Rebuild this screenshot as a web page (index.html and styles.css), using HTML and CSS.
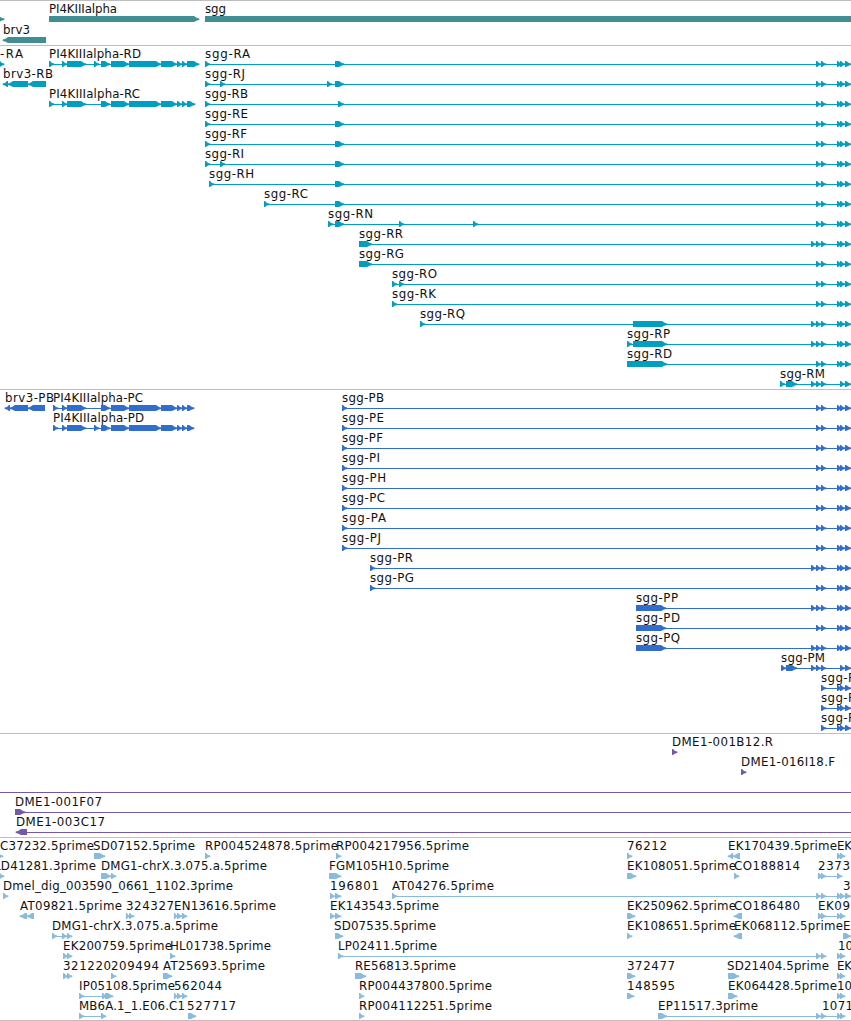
FILE: index.html
```
<!DOCTYPE html>
<html lang="en">
<head>
<meta charset="utf-8">
<title>Genome browser</title>
<link rel="stylesheet" href="styles.css">
</head>
<body>
<main class="browser">
  <svg class="track track-genes" id="genes"></svg>
  <svg class="track track-transcripts" id="transcripts"></svg>
  <svg class="track track-cds" id="cds"></svg>
  <svg class="track track-clones" id="clones"></svg>
  <svg class="track track-ests" id="ests"></svg>
</main>
<script src="tracks.js"></script>
</body>
</html>
```
FILE: styles.css
```
body {
  margin: 0;
  background: #fff;
}

.browser {
  display: flex;
  flex-direction: column;
  width: 851px;
  height: 1021px;
  overflow: hidden;
}

.track {
  display: block;
  flex: none;
  box-sizing: border-box;
  width: 851px;
  border-top: 1px solid #bebebe;
  overflow: hidden;
}

.track-genes { height: 45px; color: #408e92; }
.track-transcripts { height: 344px; color: #009fc1; }
.track-cds { height: 344px; color: #306dce; }
.track-clones { height: 104px; color: #7658a9; }
.track-ests { height: 184px; color: #88bbdd; border-bottom: 1px solid #bebebe; }

.feature { fill: currentColor; }

.label {
  fill: #111;
  font-family: "DejaVu Sans", sans-serif;
  font-size: 11.8px;
}
```
FILE: tracks.js
```
const NS = "http://www.w3.org/2000/svg";

function add(parent, name, attrs, text) {
  const el = document.createElementNS(NS, name);
  for (const key in attrs) el.setAttribute(key, attrs[key]);
  if (text) el.textContent = text;
  parent.appendChild(el);
}

// Each item: [row, label, labelStart, labelEnd, blocks, lineStart, lineEnd]
// A block is [start, end]; start > end means the reverse strand.
function draw(id, items, pitch) {
  const svg = document.getElementById(id);
  for (const [row, label, from, to, blocks, l0, l1] of items) {
    const y = 15 + row * pitch;
    if (l1 !== undefined) {
      add(svg, "rect", { class: "feature", x: l0, y: y + 3, width: l1 - l0, height: 1 });
    }
    for (const [a, b] of blocks) {
      const dir = b > a ? 1 : -1;
      const length = Math.abs(b - a);
      const neck = length > 6 ? b - dir * 5 : a + dir;
      const tip = b - dir * 2;
      const edge = b + dir * 0.3;
      add(svg, "path", {
        class: "feature",
        d: `M${a} ${y}H${neck}L${tip} ${y + 2}L${edge} ${y + 2.6}V${y + 4}L${tip} ${y + 4.6}L${neck} ${y + 6}H${a}Z`
      });
    }
    if (label) {
      add(svg, "text", { class: "label", x: from, y: y - 3, textLength: to - from }, label);
    }
  }
}

const two = [[816, 821], [821, 826], [837, 842], [840, 845], [845, 851]];
const three = [[811, 816], ...two];
const late = [[811, 816], [816, 821], [821, 826], [840, 845], [845, 851]];
const end = two.slice(2);
const core = [[101, 110], [111, 129], [129, 161], [161, 177], [177, 182], [182, 187]];
const mid = [335, 344];

draw("genes", [
  [0, "", 0, 0, [[-8, 4]]],
  [0, "PI4KIIIalpha", 49, 117, [[49, 199]]],
  [0, "sgg", 205, 226, [[205, 870]]],
  [1, "brv3", 3, 30, [[46, 3]]]
], 21);

draw("transcripts", [
  [0, "-RA", 0, 23, [[-1, 4]]],
  [0, "PI4KIIIalpha-RD", 49, 141, [[49, 54], [62, 67], [67, 86], [94, 99], ...core, [187, 199]], 49, 199],
  [2, "PI4KIIIalpha-RC", 49, 140, [[49, 54], [62, 67], [67, 86], ...core, [187, 195]], 49, 195],
  [1, "brv3-RB", 3, 53, [[8, 3], [28, 8], [46, 28]], 3, 46],
  [0, "sgg-RA", 205, 250, [[205, 210], mid, ...two], 205, 851],
  [1, "sgg-RJ", 205, 245, [[205, 210], [220, 225], [327, 332], mid, ...two], 205, 851],
  [2, "sgg-RB", 205, 248, [[205, 210], [338, 344], ...two], 205, 851],
  [3, "sgg-RE", 205, 248, [[205, 210], mid, ...two], 205, 851],
  [4, "sgg-RF", 205, 247, [[205, 210], mid, ...two], 205, 851],
  [5, "sgg-RI", 205, 244, [[205, 210], [220, 225], mid, ...two], 205, 851],
  [6, "sgg-RH", 209, 254, [[209, 214], mid, ...two], 209, 851],
  [7, "sgg-RC", 264, 308, [[264, 269], mid, ...two], 264, 851],
  [8, "sgg-RN", 328, 373, [[328, 333], mid, [399, 404], [473, 478], ...two], 328, 851],
  [9, "sgg-RR", 359, 403, [[359, 372], ...three], 359, 851],
  [10, "sgg-RG", 359, 404, [[359, 372], ...two], 359, 851],
  [11, "sgg-RO", 392, 437, [[392, 397], [399, 404], ...two], 392, 851],
  [12, "sgg-RK", 392, 436, [[392, 397], ...two], 392, 851],
  [13, "sgg-RQ", 420, 465, [[420, 425], [633, 667], ...three], 420, 851],
  [14, "sgg-RP", 627, 670, [[627, 632], [633, 667], ...three], 627, 851],
  [15, "sgg-RD", 627, 672, [[627, 667], ...two], 627, 851],
  [16, "sgg-RM", 780, 825, [[780, 785], [786, 797], ...late], 780, 851]
], 20);

const cds = [
  [0, "brv3-PB", 5, 54, [[10, 5], [28, 10], [45, 28]], 5, 45],
  [0, "PI4KIIIalpha-PC", 53, 143, [[53, 58], [62, 67], [67, 86], ...core, [187, 194]], 53, 194],
  [1, "PI4KIIIalpha-PD", 53, 144, [[53, 58], [62, 67], [67, 86], [94, 99], ...core, [187, 194]], 53, 194],
  [8, "sgg-PR", 370, 413, [[370, 375], ...three], 370, 851],
  [9, "sgg-PG", 370, 414, [[370, 375], ...two], 370, 851],
  [10, "sgg-PP", 636, 678, [[636, 666], ...three], 636, 851],
  [11, "sgg-PD", 636, 680, [[636, 666], ...two], 636, 851],
  [12, "sgg-PQ", 636, 680, [[636, 666], ...three], 636, 851],
  [13, "sgg-PM", 781, 825, [[781, 786], [786, 797], ...late], 781, 851]
];
[["B", 384], ["E", 384], ["F", 383], ["I", 380], ["H", 386], ["C", 385], ["A", 386], ["J", 381]].forEach(([name, right], i) => {
  cds.push([i, "sgg-P" + name, 342, right, [[342, 347], ...two], 342, 851]);
});
for (const row of [14, 15, 16]) {
  cds.push([row, "sgg-P", 821, 855, [[821, 826], ...end], 821, 851]);
}
draw("cds", cds, 20);

draw("clones", [
  [0, "DME1-001B12.R", 672, 773, [[672, 677]]],
  [1, "DME1-016I18.F", 741, 835, [[741, 746]]],
  [2, "", 0, 0, [], 0, 851],
  [3, "DME1-001F07", 15, 102, [[15, 25]], 15, 851],
  [4, "DME1-003C17", 16, 105, [[27, 16]], 16, 851]
], 20);

draw("ests", [
  [0, "C37232.5prime", 0, 94, [[-2, 3]]],
  [0, "SD07152.5prime", 93, 195, [[94, 105]]],
  [0, "RP004524878.5prime", 205, 338, [[205, 210]]],
  [0, "RP004217956.5prime", 336, 469, [[336, 341]]],
  [0, "76212", 627, 667, [[627, 632]]],
  [0, "EK170439.5prime", 728, 837, [[733, 728], [740, 733]]],
  [0, "EK", 837, 852, [[837, 842], [840, 845]]],
  [1, "LD41281.3prime", -6, 96, [[-1, 4]]],
  [1, "DMG1-chrX.3.075.a.5prime", 101, 267, [[101, 111], [111, 116]], 101, 116],
  [1, "FGM105H10.5prime", 329, 449, [[329, 341]]],
  [1, "EK108051.5prime", 627, 736, [[627, 636]]],
  [1, "CO188814", 734, 800, [[734, 739]]],
  [1, "2373", 818, 850, [[818, 823], [821, 826], [837, 842]], 818, 842],
  [2, "Dmel_dig_003590_0661_1102.3prime", 3, 233, [[3, 8]]],
  [2, "196801", 330, 379, [[330, 335], [335, 341]]],
  [2, "AT04276.5prime", 392, 494, [[392, 397], ...two], 392, 851],
  [2, "3", 843, 851, []],
  [3, "AT09821.5prime", 20, 122, [[27, 20], [34, 27]]],
  [3, "324327", 126, 174, [[126, 130], [129, 134]]],
  [3, "EN13616.5prime", 174, 276, [[174, 178], [177, 182], [182, 187]]],
  [3, "EK143543.5prime", 330, 439, [[330, 335], [335, 341]]],
  [3, "EK250962.5prime", 627, 736, [[627, 635]]],
  [3, "CO186480", 734, 800, [[742, 734]]],
  [3, "EK094", 818, 858, [[818, 823], [821, 826], [837, 842], [840, 845]], 818, 845],
  [4, "DMG1-chrX.3.075.a.5prime", 52, 218, [[52, 57], [62, 67], [67, 72]], 52, 72],
  [4, "SD07535.5prime", 334, 436, [[335, 343]]],
  [4, "EK108651.5prime", 627, 736, [[627, 632]]],
  [4, "EK068112.5prime", 734, 843, [[742, 734]]],
  [4, "E", 843, 851, [[843, 851]]],
  [5, "EK200759.5prime", 63, 172, [[63, 68], [67, 72]]],
  [5, "HL01738.5prime", 170, 271, [[170, 175]]],
  [5, "LP02411.5prime", 338, 437, [[338, 343], [816, 821], [821, 826]], 338, 826],
  [5, "10", 838, 853, [[837, 842], [840, 845]]],
  [6, "321220", 63, 111, [[63, 68], [67, 72]]],
  [6, "209494", 111, 159, [[111, 116]]],
  [6, "AT25693.5prime", 163, 265, [[163, 172]]],
  [6, "RE56813.5prime", 355, 456, [[355, 366]]],
  [6, "372477", 627, 675, [[627, 635]]],
  [6, "SD21404.5prime", 727, 829, [[728, 739]]],
  [6, "EK", 837, 852, [[837, 842], [840, 845]]],
  [7, "IP05108.5prime", 79, 175, [[79, 84], [102, 107], [105, 113]], 79, 113],
  [7, "562044", 174, 222, [[174, 178], [177, 182], [182, 187]]],
  [7, "RP004437800.5prime", 359, 492, [[359, 364]]],
  [7, "148595", 627, 675, [[627, 634]]],
  [7, "EK064428.5prime", 728, 837, [[728, 737]]],
  [7, "10", 837, 852, [[837, 842], [840, 845]]],
  [8, "MB6A.1_1.E06.C1", 79, 185, [[79, 84], [101, 106]], 79, 106],
  [8, "527717", 187, 236, [[188, 196]]],
  [8, "RP004112251.5prime", 359, 492, [[359, 364]]],
  [8, "EP11517.3prime", 658, 758, [[658, 667], [816, 821], [821, 826], [837, 842], [840, 845]], 658, 845],
  [8, "1071", 822, 853, []]
], 20);
```
